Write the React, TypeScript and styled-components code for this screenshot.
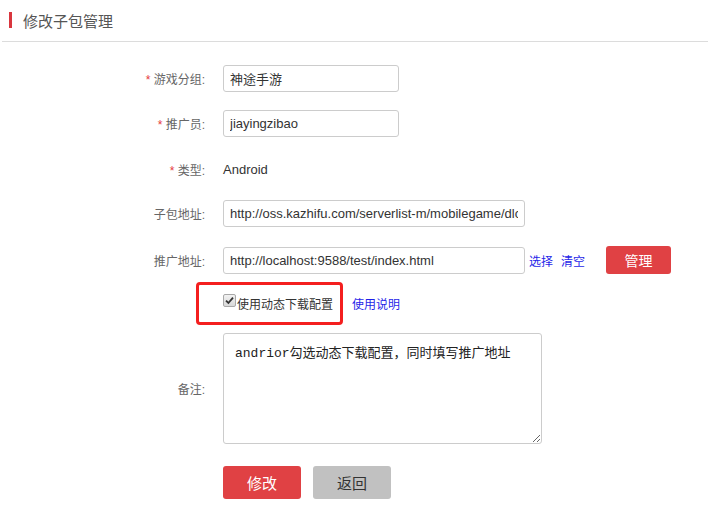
import styled, { createGlobalStyle } from 'styled-components'

const GlobalStyle = createGlobalStyle`
  html, body {
    margin: 0;
    padding: 0;
    background: #fff;
    font-family: "Liberation Sans", "Noto Sans CJK SC", sans-serif;
  }
`

export default function App() {
  return (
    <>
      <GlobalStyle />
      <Page>
        <Header>
          <TitleMark />
          <Title>修改子包管理</Title>
        </Header>
        <Form>
          <Row $top={23}>
            <Label $required>游戏分组:</Label>
            <Field>
              <TextInput $width={176} defaultValue='神途手游' />
            </Field>
          </Row>
          <Row $top={18}>
            <Label $required>推广员:</Label>
            <Field>
              <TextInput $width={176} defaultValue='jiayingzibao' />
            </Field>
          </Row>
          <Row $top={19}>
            <Label $required>类型:</Label>
            <Field>
              <Plain>Android</Plain>
            </Field>
          </Row>
          <Row $top={17}>
            <Label>子包地址:</Label>
            <Field>
              <TextInput $width={302} defaultValue='http://oss.kazhifu.com/serverlist-m/mobilegame/dlc/' />
            </Field>
          </Row>
          <Row $top={19}>
            <Label>推广地址:</Label>
            <Field>
              <TextInput $width={302} defaultValue='http://localhost:9588/test/index.html' />
              <LinkText $left={4}>选择</LinkText>
              <LinkText $left={8}>清空</LinkText>
              <Button $variant='primary' $width={65} $height={28} $left={21}>
                管理
              </Button>
            </Field>
          </Row>
          <Row $top={8}>
            <Label />
            <Field>
              <Highlight>
                <CheckMark>
                  <svg width='9' height='9' viewBox='0 0 9 9'>
                    <path d='M1 4.6 L3.4 7 L8 1.6' fill='none' stroke='#333' strokeWidth='1.8' />
                  </svg>
                </CheckMark>
                使用动态下载配置
              </Highlight>
              <LinkText $left={9}>使用说明</LinkText>
            </Field>
          </Row>
          <Row $top={8}>
            <Label>备注:</Label>
            <Field>
              <Remark defaultValue='andrior勾选动态下载配置，同时填写推广地址' />
            </Field>
          </Row>
          <Row $top={22}>
            <Label />
            <Field>
              <Button $variant='primary' $width={78} $height={33} $size={15}>
                修改
              </Button>
              <Button $variant='ghost' $width={78} $height={33} $left={12} $size={15}>
                返回
              </Button>
            </Field>
          </Row>
        </Form>
      </Page>
    </>
  )
}

const Page = styled.div`
  width: 708px;
  min-height: 527px;
`

const Header = styled.div`
  display: flex;
  align-items: center;
  height: 41px;
  margin-left: 2px;
  border-bottom: 1px solid #dcdcdc;
`

const TitleMark = styled.span`
  width: 3px;
  height: 16px;
  margin-left: 7px;
  margin-top: -1px;
  background: #d9363e;
`

const Title = styled.span`
  margin-left: 11px;
  font-size: 15px;
  color: #555;
`

const Form = styled.div`
  display: flex;
  flex-direction: column;
`

const Row = styled.div<{ $top: number }>`
  display: grid;
  grid-template-columns: 205px 1fr;
  column-gap: 18px;
  align-items: center;
  min-height: 27px;
  margin-top: ${(p) => p.$top}px;
`

const Label = styled.div<{ $required?: boolean }>`
  text-align: right;
  font-size: 12px;
  color: #666;
  &::before {
    content: ${(p) => (p.$required ? "'* '" : "''")};
    color: #e5393d;
  }
`

const Field = styled.div`
  display: flex;
  align-items: center;
`

const TextInput = styled.input<{ $width: number }>`
  box-sizing: border-box;
  width: ${(p) => p.$width}px;
  height: 27px;
  padding: 0 6px;
  border: 1px solid #ccc;
  border-radius: 3px;
  font-family: "Liberation Sans", "Noto Sans CJK SC", sans-serif;
  font-size: 13px;
  color: #333;
  outline: none;
`

const Plain = styled.span`
  font-size: 13px;
  color: #333;
`

const LinkText = styled.a<{ $left: number }>`
  margin-left: ${(p) => p.$left}px;
  font-size: 12px;
  color: #1f1fe8;
  cursor: pointer;
  white-space: nowrap;
`

const Button = styled.button<{
  $variant: 'primary' | 'ghost'
  $width: number
  $height: number
  $left?: number
  $size?: number
}>`
  box-sizing: border-box;
  width: ${(p) => p.$width}px;
  height: ${(p) => p.$height}px;
  margin-left: ${(p) => p.$left ?? 0}px;
  border: none;
  border-radius: 3px;
  font-family: "Liberation Sans", "Noto Sans CJK SC", sans-serif;
  font-size: ${(p) => p.$size ?? 14}px;
  background: ${(p) => (p.$variant === 'primary' ? '#e04144' : '#c1c1c1')};
  color: ${(p) => (p.$variant === 'primary' ? '#fff' : '#333')};
  cursor: pointer;
`

const Highlight = styled.div`
  box-sizing: border-box;
  display: flex;
  align-items: center;
  height: 43px;
  margin-left: -27px;
  padding: 0 7px 0 24px;
  border: 3px solid #f41f1f;
  border-radius: 4px;
  font-size: 12px;
  color: #333;
`

const CheckMark = styled.span`
  box-sizing: border-box;
  display: inline-flex;
  align-items: center;
  justify-content: center;
  width: 13px;
  height: 13px;
  margin-right: 1px;
  margin-top: -6px;
  border: 1px solid #a8a8a8;
  border-radius: 2px;
  background: linear-gradient(#f2f2f2, #d8d8d8);
`

const Remark = styled.textarea`
  box-sizing: border-box;
  width: 319px;
  height: 111px;
  padding: 8px 11px;
  border: 1px solid #ccc;
  border-radius: 3px;
  font-family: "Liberation Mono", "Noto Sans CJK SC", monospace;
  font-size: 13px;
  color: #222;
  outline: none;
`
